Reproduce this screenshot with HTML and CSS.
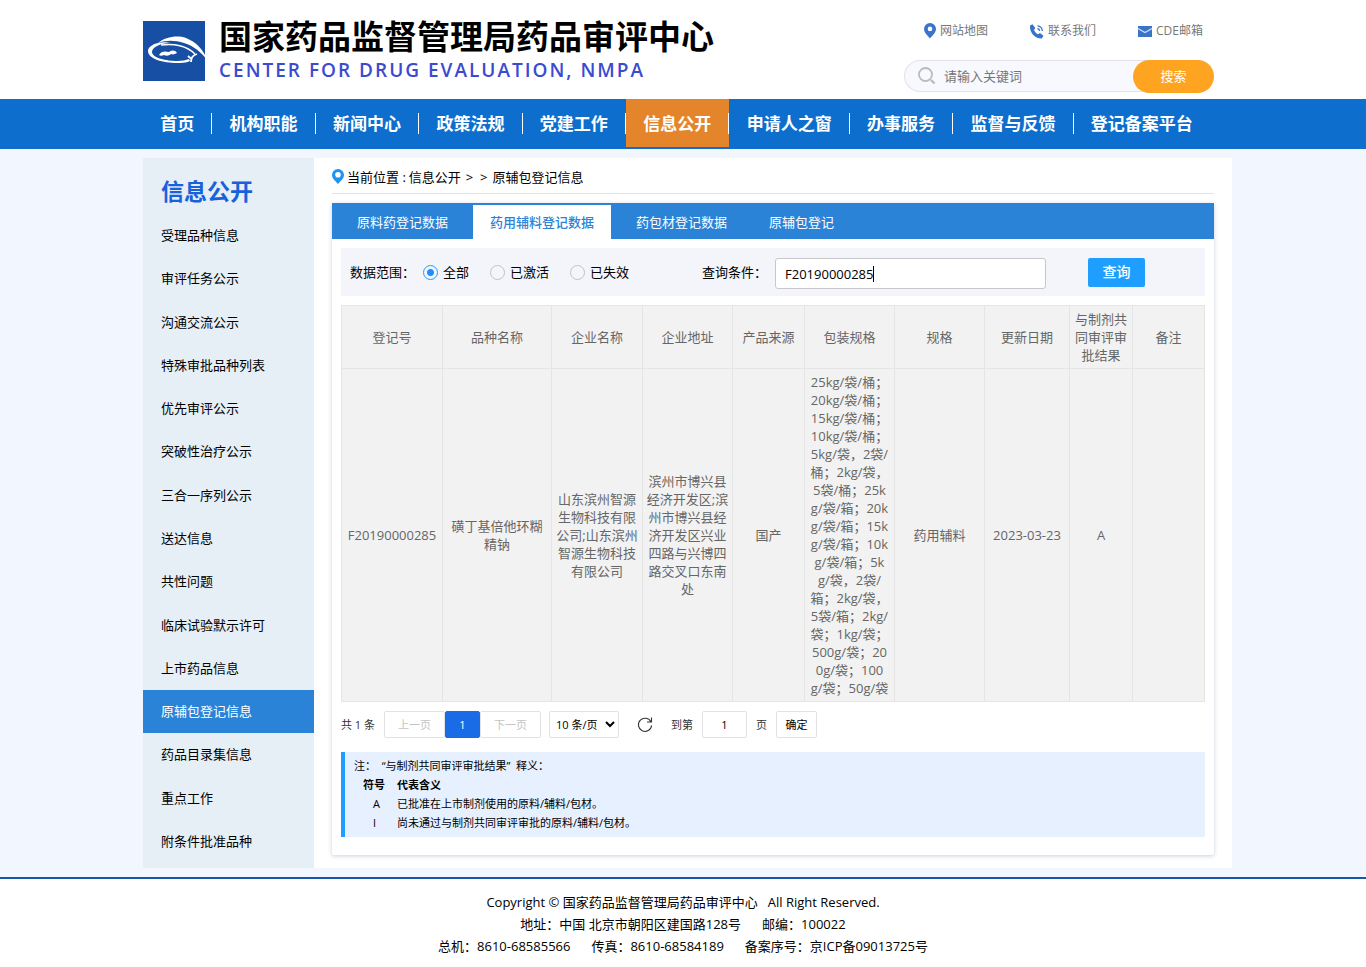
FILE: index.html
```html
<!DOCTYPE html>
<html lang="zh-CN">
<head>
<meta charset="utf-8">
<meta name="viewport" content="width=device-width, initial-scale=1">
<title>国家药品监督管理局药品审评中心</title>
<link rel="stylesheet" href="styles.css">
</head>
<body>
<header class="container header">
  <a class="brand" href="#">
    <svg class="logo" viewBox="0 0 66 60" aria-hidden="true">
      <rect width="62" height="60" fill="#164fa3"/>
      <path d="M15 22C22 16 34 14 43 17c10 4 17 11 22 23-7-9-14-15-24-18-9-3-18-3-26 0z" fill="#fff"/>
      <path d="M15 22c4-1 9-1 12 0-9 0-18 4-18 9 0 6 15 9 25 9 5 0 9-1 12-2l1 2c-4 2-9 2-13 2C20 42 5 38 5 30c0-4 5-7 10-8z" fill="#fff"/>
      <path d="M18 24c13-2 26 1 34 9" fill="none" stroke="#fff" stroke-width="1.500"/>
      <path d="M54 33c-4 1-6 3-6 8M45 35c1 1 2 2 4 3" fill="none" stroke="#fff" stroke-width="1.800"/>
      <path d="M16 34c2-4 6-4 10-3 3-2 6-2 8 1-2 1-4 2-6 1-2 2-5 2-7 1-2 1-4 1-5 0z" fill="#fff"/>
    </svg>
    <span class="brand-text">
      <span class="brand-cn">国家药品监督管理局药品审评中心</span>
      <span class="brand-en">CENTER FOR DRUG EVALUATION, NMPA</span>
    </span>
  </a>
  <div class="tools">
    <div class="quick">
      <a href="#"><svg width="12" height="16" viewBox="0 0 12 16" aria-hidden="true"><path fill-rule="evenodd" d="M6 0a6 6 0 0 0-6 6c0 3.500 3.500 6.500 6 9.500 2.500-3 6-6 6-9.500a6 6 0 0 0-6-6zm0 3.600a2.300 2.300 0 1 1 0 4.600 2.300 2.300 0 0 1 0-4.600z" fill="#3a74c8"/></svg>网站地图</a>
      <a href="#"><svg width="14" height="15" viewBox="0 0 14 15" aria-hidden="true"><path d="M0 1.500 2.500.3 5.300 4 4 6c.8 1.800 2.200 3.300 4 4.300l2-1.300 3.500 2.800-1.700 2.700C5.500 15-.8 8.500 0 1.500z" fill="#3a74c8"/><path d="M7.500 4.500c1.300.3 2 1.100 2.200 2.500M7.500 1.800c2.800.3 4.600 2.200 4.900 5.200" fill="none" stroke="#3a74c8" stroke-width="1.300"/></svg>联系我们</a>
      <a href="#"><svg width="14" height="11" viewBox="0 0 14 11" aria-hidden="true"><path d="M0 0h14v11H0z" fill="#3a74c8"/><path d="M0 2.500 7 6.500l7-4" fill="none" stroke="#c9dcf5" stroke-width="1.300"/></svg>CDE邮箱</a>
    </div>
    <form class="site-search">
      <svg width="18" height="18" viewBox="0 0 18 18" aria-hidden="true"><circle cx="7.500" cy="7.500" r="6.500" fill="none" stroke="#bbb" stroke-width="1.800"/><path d="m13 13 3.500 3.500" stroke="#bbb" stroke-width="2.400"/></svg>
      <input type="text" placeholder="请输入关键词" aria-label="请输入关键词">
      <button type="button">搜索</button>
    </form>
  </div>
</header>
<nav class="nav">
  <ul class="container nav-list">
    <li><a href="#">首页</a></li>
    <li><a href="#">机构职能</a></li>
    <li><a href="#">新闻中心</a></li>
    <li><a href="#">政策法规</a></li>
    <li><a href="#">党建工作</a></li>
    <li class="active"><a href="#">信息公开</a></li>
    <li><a href="#">申请人之窗</a></li>
    <li><a href="#">办事服务</a></li>
    <li><a href="#">监督与反馈</a></li>
    <li><a href="#">登记备案平台</a></li>
  </ul>
</nav>
<div class="band">
  <div class="container">
    <div class="layout">
      <aside class="side">
        <h2>信息公开</h2>
        <ul>
          <li><a href="#">受理品种信息</a></li>
          <li><a href="#">审评任务公示</a></li>
          <li><a href="#">沟通交流公示</a></li>
          <li><a href="#">特殊审批品种列表</a></li>
          <li><a href="#">优先审评公示</a></li>
          <li><a href="#">突破性治疗公示</a></li>
          <li><a href="#">三合一序列公示</a></li>
          <li><a href="#">送达信息</a></li>
          <li><a href="#">共性问题</a></li>
          <li><a href="#">临床试验默示许可</a></li>
          <li><a href="#">上市药品信息</a></li>
          <li class="active"><a href="#">原辅包登记信息</a></li>
          <li><a href="#">药品目录集信息</a></li>
          <li><a href="#">重点工作</a></li>
          <li><a href="#">附条件批准品种</a></li>
        </ul>
      </aside>
      <main class="content">
        <div class="crumb">
          <svg width="12" height="15" viewBox="0 0 12 15" aria-hidden="true"><path fill-rule="evenodd" d="M6 0a6 6 0 0 0-6 6c0 3.500 3.500 6 6 9 2.500-3 6-5.500 6-9a6 6 0 0 0-6-6zm0 3a2.800 2.800 0 1 1 0 5.600A2.800 2.800 0 0 1 6 3z" fill="#1e94f5"/></svg>
          <span>当前位置 :</span><a href="#">信息公开</a><span class="sep">&gt; &nbsp;&gt;</span><a href="#">原辅包登记信息</a>
        </div>
        <section class="panel">
          <div class="tabs">
            <a href="#">原料药登记数据</a>
            <a href="#" class="current">药用辅料登记数据</a>
            <a href="#">药包材登记数据</a>
            <a href="#" class="narrow">原辅包登记</a>
          </div>
          <div class="panel-body">
            <form class="filter">
              <div class="scope">
                <span>数据范围：</span>
                <label><input type="radio" name="scope" checked>全部</label>
                <label><input type="radio" name="scope">已激活</label>
                <label><input type="radio" name="scope">已失效</label>
              </div>
              <label for="keyword">查询条件：</label>
              <input id="keyword" type="text" value="F20190000285">
              <button type="button">查询</button>
            </form>
            <table class="data">
              <colgroup><col class="c-no"><col class="c-name"><col class="c-org"><col class="c-mid"><col class="c-small"><col class="c-mid"><col class="c-mid"><col class="c-date"><col class="c-result"><col class="c-small"></colgroup>
              <thead>
                <tr><th>登记号</th><th>品种名称</th><th>企业名称</th><th>企业地址</th><th>产品来源</th><th>包装规格</th><th>规格</th><th>更新日期</th><th>与制剂共<br>同审评审<br>批结果</th><th>备注</th></tr>
              </thead>
              <tbody>
                <tr>
                  <td>F20190000285</td>
                  <td>磺丁基倍他环糊<br>精钠</td>
                  <td>山东滨州智源<br>生物科技有限<br>公司;山东滨州<br>智源生物科技<br>有限公司</td>
                  <td>滨州市博兴县<br>经济开发区;滨<br>州市博兴县经<br>济开发区兴业<br>四路与兴博四<br>路交叉口东南<br>处</td>
                  <td>国产</td>
                  <td>25kg/袋/桶；<br>20kg/袋/桶；<br>15kg/袋/桶；<br>10kg/袋/桶；<br>5kg/袋，2袋/<br>桶；2kg/袋，<br>5袋/桶；25k<br>g/袋/箱；20k<br>g/袋/箱；15k<br>g/袋/箱；10k<br>g/袋/箱；5k<br>g/袋，2袋/<br>箱；2kg/袋，<br>5袋/箱；2kg/<br>袋；1kg/袋；<br>500g/袋；20<br>0g/袋；100<br>g/袋；50g/袋</td>
                  <td>药用辅料</td>
                  <td>2023-03-23</td>
                  <td>A</td>
                  <td></td>
                </tr>
              </tbody>
            </table>
            <div class="pager">
              <span class="total">共 1 条</span>
              <div class="pages"><button type="button" disabled>上一页</button><button type="button" class="on">1</button><button type="button" disabled>下一页</button></div>
              <select aria-label="每页条数"><option>10 条/页</option></select>
              <button type="button" class="refresh" aria-label="刷新"><svg width="16" height="16" viewBox="0 0 16 16" aria-hidden="true"><path d="M14 5A6.600 6.600 0 1 0 14.600 8.500M14.500.5V5H10" fill="none" stroke="#333" stroke-width="1.100"/></svg></button>
              <label for="page-no">到第</label>
              <input id="page-no" type="text" value="1">
              <span>页</span>
              <button type="button" class="go">确定</button>
            </div>
            <div class="note">
              <p>注：&nbsp; “与制剂共同审评审批结果”&nbsp; 释义：</p>
              <table>
                <tr><th>符号</th><th>代表含义</th></tr>
                <tr><td>A</td><td>已批准在上市制剂使用的原料/辅料/包材。</td></tr>
                <tr><td>I</td><td>尚未通过与制剂共同审评审批的原料/辅料/包材。</td></tr>
              </table>
            </div>
          </div>
        </section>
      </main>
    </div>
  </div>
</div>
<footer class="footer">
  <p>Copyright © 国家药品监督管理局药品审评中心 &nbsp; All Right Reserved.</p>
  <p><span>地址：中国 北京市朝阳区建国路128号</span><span>邮编：100022</span></p>
  <p><span>总机：8610-68585566</span><span>传真：8610-68584189</span><span>备案序号：京ICP备09013725号</span></p>
</footer>
</body>
</html>
```
FILE: styles.css
```css
* { box-sizing: border-box; }
body {
  margin: 0;
  background: #fff;
  color: #000;
  font: 13px/18px "Open Sans", "Noto Sans CJK SC", sans-serif;
}
a { color: inherit; text-decoration: none; }
ul { margin: 0; padding: 0; list-style: none; }
p, h2 { margin: 0; }
button, input, select { font: inherit; color: inherit; }
.container { max-width: 1080px; margin: 0 auto; }

.header { display: flex; justify-content: space-between; height: 99px; padding-right: 9px; }
.brand { display: flex; gap: 10px; padding-top: 16px; }
.logo { width: 66px; height: 60px; margin-top: 5px; flex: none; }
.brand-text { display: flex; flex-direction: column; }
.brand-cn { font-size: 33px; line-height: 42px; font-weight: 700; white-space: nowrap; }
.brand-en { font-size: 19px; line-height: 24px; font-weight: 600; letter-spacing: 2px; color: #3b4bd0; white-space: nowrap; }
.tools { width: 310px; padding-top: 22px; }
.quick { display: flex; justify-content: space-between; padding: 0 11px 0 20px; color: #777; font-size: 12px; }
.quick a { display: flex; align-items: center; gap: 4px; }
.site-search {
  display: flex; align-items: center; height: 32px; margin-top: 20px; padding-left: 13px;
  border: 1px solid #e3e3e6; border-right: 0; border-radius: 16px; background: #f8f9fe;
}
.site-search input { flex: 1; min-width: 0; padding: 0 8px; border: 0; background: none; outline: 0; }
.site-search input::placeholder { color: #757575; }
.site-search button { width: 81px; height: 33px; border: 0; border-radius: 17px; background: #ffa421; color: #fff; }

.nav { height: 50px; background: #0d6ecd; color: #fff; }
.nav-list { display: flex; padding-right: 13px; }
.nav-list li { display: flex; flex: 1 0 auto; align-items: center; height: 48px; }
.nav-list a { flex: 1; text-align: center; padding: 0 17px; font-size: 17px; line-height: 21px; font-weight: 700; border-right: 1px solid #fff; }
.nav-list li:last-child a { border-right: 0; }
.nav-list .active { background: #e5852b; }

.band { padding: 9px 0; background: #f2f7ff; }
.layout { display: flex; margin-right: -9px; background: #fff; }
.side { display: flex; flex-direction: column; flex: none; width: 171px; padding: 16px 0 5px; background: #e6eef6; }
.side h2 { padding: 0 18px; margin-bottom: 6px; color: #1762dc; font-size: 23px; line-height: 34px; }
.side ul { display: flex; flex-direction: column; flex: 1; }
.side li { display: flex; align-items: center; flex: 1; min-height: 43px; padding: 0 18px 1px; }
.side .active { background: #2b83d8; color: #fff; }

.content { flex: 1; min-width: 0; padding: 0 18px 13px; }
.crumb { display: flex; align-items: center; gap: 3px; height: 36px; margin-bottom: 9px; padding-top: 2px; border-bottom: 1px solid #e4e4e4; }
.crumb .sep { padding: 0 2px; }
.panel { border-radius: 2px; box-shadow: 0 1px 4px rgba(30, 70, 110, 0.25); }
.tabs { display: flex; height: 36px; padding-top: 2px; background: #2b83d8; color: #fff; }
.tabs a { display: flex; align-items: center; padding: 0 25px; }
.tabs .current { padding: 0 17px; background: #fff; color: #2b83d8; font-weight: 500; }
.tabs .narrow { padding: 0 17px; }
.panel-body { padding: 9px 9px 18px; }

.filter { display: flex; align-items: center; height: 48px; margin-bottom: 9px; padding-left: 9px; background: #f3f5fa; }
.scope { display: flex; align-items: center; width: 352px; }
.scope label { display: flex; align-items: center; gap: 5px; margin-right: 21px; }
.scope span { width: 73px; }
.scope input {
  appearance: none; width: 15px; height: 15px; margin: 0;
  border: 1px solid #c2c2c2; border-radius: 50%;
}
.scope input:checked { border-color: #1e9fff; background: radial-gradient(circle, #1e8fff 3px, transparent 4px); }
.filter input[type="text"] {
  width: 271px; height: 31px; margin: 3px 42px 0 8px; padding: 0 9px; outline: 0;
  border: 1px solid #c8c8cc; border-radius: 3px;
  background: linear-gradient(#000, #000) 97px 50% / 1px 16px no-repeat #fff;
}
.filter button { width: 57px; height: 29px; padding: 0; border: 0; border-radius: 2px; background: #1e9fff; color: #fff; font-size: 14px; font-weight: 500; }

.data { width: 100%; table-layout: fixed; border-collapse: collapse; background: #f2f2f2; color: #666; text-align: center; }
.data th, .data td { padding: 4px 0; border: 1px solid #e5e5e5; font-weight: 400; white-space: nowrap; }
.c-no { width: 101px; }
.c-name { width: 109px; }
.c-org { width: 91px; }
.c-mid { width: 90px; }
.c-small { width: 72px; }
.c-date { width: 85px; }
.c-result { width: 63px; }

.pager { display: flex; align-items: center; height: 27px; margin: 9px 0 14px; font-size: 11px; color: #333; }
.pager > * { flex: none; }
.pager button, .pager select, .pager input { height: 27px; padding: 0; border: 1px solid #e2e2e2; border-radius: 2px; background: #fff; }
.total { width: 43px; }
.pages { display: flex; width: 157px; margin-right: 8px; }
.pages button { flex: 1; color: #c4c4c4; }
.pages .on { flex: none; width: 35px; border-color: #196be6; background: #196be6; color: #fff; }
.pager select { width: 70px; padding-left: 2px; color: #000; }
.pager .refresh { display: flex; align-items: center; margin: 0 18px; border: 0; }
.pager input { width: 45px; margin: 0 9px; text-align: center; color: #000; }
.pager .go { width: 41px; margin-left: 9px; color: #000; }

.note { padding: 4px 9px 5px; border-left: 4px solid #1e9fff; background: #e6f0ff; font-size: 11px; line-height: 19px; }
.note table { margin-left: 9px; border-collapse: collapse; }
.note th, .note td { padding: 0; text-align: left; }
.note th:first-child, .note td:first-child { width: 34px; }
.note td:first-child { padding-left: 10px; }

.footer { padding: 12px 0; border-top: 2px solid #1658a8; line-height: 22px; text-align: center; }
.footer span + span { margin-left: 21px; }
```
